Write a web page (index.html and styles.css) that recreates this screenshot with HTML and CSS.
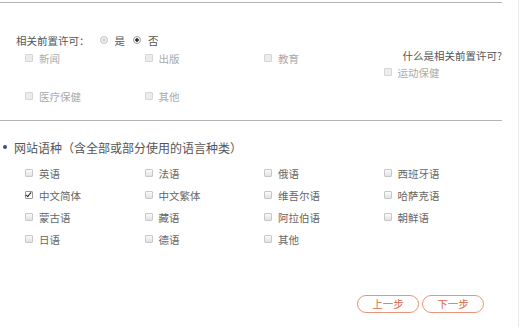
FILE: index.html
```html
<!DOCTYPE html>
<html lang="zh">
<head>
<meta charset="UTF-8">
<meta name="viewport" content="width=device-width, initial-scale=1.0">
<title>网站信息</title>
<link rel="stylesheet" href="styles.css">
</head>
<body>
<div class="wrap">
    <div class="content">
        <div class="section perm">
            <div class="perm-row">
                <span class="perm-label">相关前置许可：</span>
                <label class="radio"><span class="dot"></span>是</label>
                <label class="radio"><span class="dot on"></span>否</label>
            </div>
            <div class="perm-grid">
                <label class="check off"><span class="box"></span>新闻</label>
                <label class="check off"><span class="box"></span>出版</label>
                <label class="check off"><span class="box"></span>教育</label>
                <a class="help">什么是相关前置许可?</a>
                <label class="check off sport"><span class="box"></span>运动保健</label>
                <label class="check off low"><span class="box"></span>医疗保健</label>
                <label class="check off low"><span class="box"></span>其他</label>
            </div>
        </div>

        <div class="section lang">
            <h2 class="title"><span class="bullet"></span>网站语种（含全部或部分使用的语言种类）</h2>
            <div class="lang-grid">
                <label class="check"><span class="box"></span>英语</label>
                <label class="check"><span class="box"></span>法语</label>
                <label class="check"><span class="box"></span>俄语</label>
                <label class="check"><span class="box"></span>西班牙语</label>
                <label class="check"><span class="box checked"></span>中文简体</label>
                <label class="check"><span class="box"></span>中文繁体</label>
                <label class="check"><span class="box"></span>维吾尔语</label>
                <label class="check"><span class="box"></span>哈萨克语</label>
                <label class="check"><span class="box"></span>蒙古语</label>
                <label class="check"><span class="box"></span>藏语</label>
                <label class="check"><span class="box"></span>阿拉伯语</label>
                <label class="check"><span class="box"></span>朝鲜语</label>
                <label class="check"><span class="box"></span>日语</label>
                <label class="check"><span class="box"></span>德语</label>
                <label class="check"><span class="box"></span>其他</label>
            </div>
        </div>

        <div class="actions">
            <button class="btn">上一步</button>
            <button class="btn">下一步</button>
        </div>
    </div>
</div>
</body>
</html>
```

FILE: styles.css
```css
body {
    margin: 0;
    font-family: "Noto Sans CJK SC", "Microsoft YaHei", sans-serif;
    color: #666;
    background: #fff;
    overflow: hidden;
}
.wrap {
    width: 518px;
    height: 327px;
    border-right: 1px solid #e8e8e8;
}
.content {
    width: 502px;
    padding-top: 2px;
}
.section {
    border-top: 1px solid #b4b4b4;
}
.perm {
    height: 117px;
}
.perm-row {
    display: flex;
    align-items: center;
    margin: 30px 0 0 16px;
    height: 14px;
    font-size: 10.5px;
    color: #555;
}
.perm-label {
    margin-right: 10px;
}
.radio {
    display: flex;
    align-items: center;
    margin-right: 8px;
}
.dot {
    width: 6px;
    height: 6px;
    border: 1px solid #c4c4c4;
    border-radius: 50%;
    margin-right: 7px;
    background: radial-gradient(circle, #d8d8d8 0 1.5px, #f4f4f4 2px);
}
.dot.on {
    border-color: #999;
    background: radial-gradient(circle, #333 0 1.5px, #fff 2px);
}
.perm-grid {
    display: grid;
    grid-template-columns: repeat(4, 119.5px);
    grid-template-rows: 14px 14px 10px 14px;
    margin: 4px 0 0 24px;
    width: 478px;
    font-size: 10.5px;
}
.help {
    grid-column: 4;
    grid-row: 1;
    justify-self: end;
    margin-top: -2px;
    color: #555;
    font-size: 10.5px;
    line-height: 14px;
    cursor: pointer;
}
.sport {
    grid-column: 4;
    grid-row: 2;
}
.low {
    grid-row: 4;
}
.check {
    display: flex;
    align-items: center;
    height: 14px;
    font-size: 10.5px;
    color: #666;
}
.check.off {
    color: #aaa;
}
.box {
    position: relative;
    width: 6px;
    height: 6px;
    margin: 0 6px 0 1px;
    border: 1px solid #c8c8c8;
    border-radius: 1px;
    background: linear-gradient(#fafafa, #e2e2e2);
}
.check.off .box {
    border-color: #d6d6d6;
    background: #ececec;
}
.box.checked {
    border-color: #999;
    background: #fff;
}
.box.checked::after {
    content: "";
    position: absolute;
    left: 1px;
    top: -1px;
    width: 2px;
    height: 5px;
    border: solid #222;
    border-width: 0 1.5px 1.5px 0;
    transform: rotate(40deg);
}
.lang {
    height: 170px;
}
.title {
    display: flex;
    align-items: center;
    margin: 18px 0 0 3px;
    height: 16px;
    font-size: 12px;
    font-weight: normal;
    color: #555;
}
.bullet {
    width: 4px;
    height: 4px;
    border-radius: 50%;
    background: #3b4a8c;
    margin-right: 7px;
}
.lang-grid {
    display: grid;
    grid-template-columns: repeat(4, 119.5px);
    grid-auto-rows: 14px;
    row-gap: 8px;
    margin: 11px 0 0 24px;
    width: 478px;
}
.actions {
    display: flex;
    justify-content: flex-end;
    gap: 3px;
    margin-top: 4px;
    padding-right: 18px;
}
.btn {
    width: 62px;
    height: 18px;
    padding: 0;
    border: 1px solid #eb947c;
    border-radius: 9px;
    background: #fff;
    color: #e0684c;
    font-family: "Noto Sans CJK SC", sans-serif;
    font-size: 10.5px;
    line-height: 16px;
    cursor: pointer;
}
```
